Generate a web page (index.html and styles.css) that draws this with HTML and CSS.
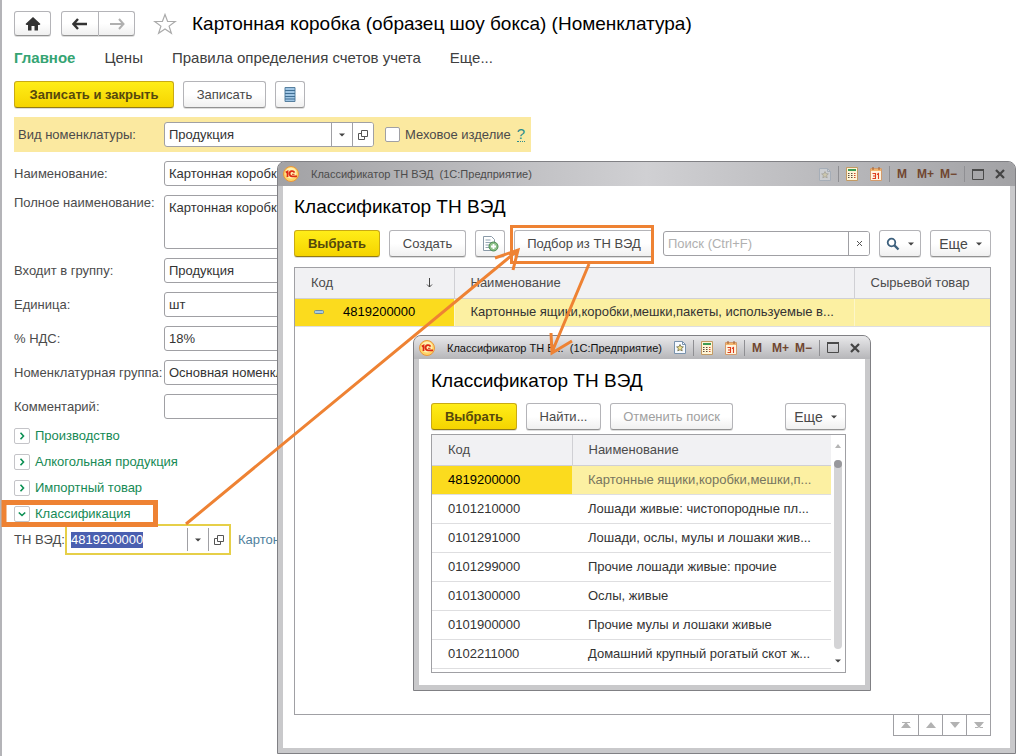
FILE: index.html
```html
<!DOCTYPE html>
<html lang="ru">
<head>
<meta charset="utf-8">
<meta name="viewport" content="width=device-width, initial-scale=1">
<title>Картонная коробка (образец шоу бокса) (Номенклатура)</title>
<link rel="stylesheet" href="styles.css">
</head>
<body>
<svg class="sprite" aria-hidden="true">
  <symbol id="logo" viewBox="0 0 16 16"><circle cx="8" cy="8" r="7.5" fill="#ffd467" stroke="#e9963c"/><circle cx="8" cy="7" r="5.500" fill="#fff0b0"/><path d="M2.800 6.500L4.500 5.500V11M11.500 6.600A2.600 2.600 0 1 0 9.200 10.300H14" fill="none" stroke="#dd2a12" stroke-width="1.800"/><path d="M9 8.300h2.500" stroke="#dd2a12" stroke-width="1"/></symbol>
  <symbol id="open" viewBox="0 0 10 10"><path d="M3.500.5h6v6h-6zM3.500 3.500h-3v6h6v-3" fill="none" stroke="#555"/></symbol>
  <symbol id="caret" viewBox="0 0 6 4"><path d="M0 .5h6L3 3.500z" fill="#444"/></symbol>
  <symbol id="right" viewBox="0 0 8 8"><path d="M2.500 .8L5.500 4l-3 3.200" fill="none" stroke="#0a8f52" stroke-width="1.600"/></symbol>
  <symbol id="down" viewBox="0 0 8 8"><path d="M.8 2.500L4 5.500l3.200-3" fill="none" stroke="#0a8f52" stroke-width="1.600"/></symbol>
  <symbol id="favourite" viewBox="0 0 12 13"><path d="M.5.5h8l3 3v9H.5z" fill="#f6faff" stroke="#7892ad"/><path d="M8.500.5v3h3" fill="none" stroke="#7892ad"/><path d="M6 3.500l1 2.200 2.400.2-1.800 1.600.6 2.400L6 8.700l-2.200 1.200.6-2.400-1.800-1.600L5 5.700z" fill="#f5e58b" stroke="#6f6b45" stroke-width=".8"/></symbol>
  <symbol id="calc" viewBox="0 0 12 14"><path d="M.5.5h11v13H.5z" fill="#fff5d6" stroke="#c39a63"/><path d="M2 2h8v2H2z" fill="#3d9b55"/><path d="M2 6.500h1.500M5 6.500h1.500M2 8.500h1.500M5 8.500h1.500M2 10.500h1.500M5 10.500h1.500" stroke="#5d4a3c"/><path d="M8 6.500h1.500M8 8.500h1.500M8 10.500h1.500" stroke="#d0492c"/></symbol>
  <symbol id="calendar" viewBox="0 0 12 14"><path d="M.5 1.500h11v12H.5z" fill="#fff4df" stroke="#d39b6c"/><path d="M1 2h10v2H1z" fill="#f2b46d"/><path d="M3 0v3M9 0v3" stroke="#a05b2c"/><path d="M2.500 6.500h3v5h-3M3 9h2.500M7 7.500l1.500-1V12" fill="none" stroke="#df3d1d" stroke-width="1.100"/></symbol>
  <symbol id="maximize" viewBox="0 0 12 11"><path d="M.5 1h11v9.500H.5z" fill="none" stroke="#4a4a4a"/><path d="M0 1h12" stroke="#4a4a4a" stroke-width="2"/></symbol>
  <symbol id="close" viewBox="0 0 10 10"><path d="M1 1l8 8M9 1L1 9" stroke="#444" stroke-width="2.200"/></symbol>
</svg>

<main class="card">
  <header class="card-head">
    <button class="btn btn-home" type="button" aria-label="Домой"><svg width="16" height="14" viewBox="0 0 16 14"><path d="M8 0l7.500 7-1 1H13v5.500H9.500V9h-3v4.500H3V8H1.500l-1-1z" fill="#333"/></svg></button>
    <div class="history">
      <button class="btn" type="button" aria-label="Назад"><svg width="16" height="12" viewBox="0 0 16 12"><path d="M6 1L1.500 6 6 11M2 6h13" fill="none" stroke="#333" stroke-width="2.400"/></svg></button>
      <button class="btn" type="button" aria-label="Вперед"><svg width="16" height="12" viewBox="0 0 16 12"><path d="M10 1l4.500 5-4.500 5M14 6H1" fill="none" stroke="#b0b0b0" stroke-width="2"/></svg></button>
    </div>
    <svg class="star" width="24" height="22" viewBox="0 0 24 22"><path d="M12 1.500l2.600 7h7.600l-6.100 4.600 2.300 7.200L12 16l-6.400 4.300 2.300-7.200L1.800 8.500h7.600z" fill="#fff" stroke="#aaa" stroke-width="1.200"/></svg>
    <h1 class="title">Картонная коробка (образец шоу бокса) (Номенклатура)</h1>
  </header>
  <nav class="tabs">
    <a class="tab tab-active" href="#">Главное</a>
    <a class="tab" href="#">Цены</a>
    <a class="tab" href="#">Правила определения счетов учета</a>
    <a class="tab" href="#">Еще...</a>
  </nav>
  <div class="commands">
    <button class="btn btn-main btn-save" type="button">Записать и закрыть</button>
    <button class="btn btn-write" type="button">Записать</button>
    <button class="btn btn-icon" type="button" aria-label="Список"><svg width="12" height="15" viewBox="0 0 12 15"><path d="M1 .5h10v14H1z" fill="#9fc5e4" stroke="#57809f"/><path d="M1 3.500h10M1 6.500h10M1 9.500h10M1 12h10" stroke="#406f94"/></svg></button>
  </div>

  <div class="kind">
    <label class="label" for="kind">Вид номенклатуры:</label>
    <div class="combo">
      <input class="combo-text" id="kind" value="Продукция">
      <button class="combo-btn" type="button" aria-label="Выбрать"><svg width="6" height="4"><use href="#caret"/></svg></button>
      <button class="combo-btn" type="button" aria-label="Открыть"><svg width="10" height="10"><use href="#open"/></svg></button>
    </div>
    <label class="check"><input class="check-box" type="checkbox">Меховое изделие</label>
    <a class="help" href="#">?</a>
  </div>

  <form class="fields">
    <label class="label" for="name">Наименование:</label><input class="field" id="name" value="Картонная коробка">
    <label class="label label-top" for="full">Полное наименование:</label><textarea class="field field-tall" id="full">Картонная коробка</textarea>
    <label class="label" for="group">Входит в группу:</label><input class="field" id="group" value="Продукция">
    <label class="label" for="unit">Единица:</label><input class="field" id="unit" value="шт">
    <label class="label" for="vat">% НДС:</label><input class="field" id="vat" value="18%">
    <label class="label" for="ngroup">Номенклатурная группа:</label><input class="field" id="ngroup" value="Основная номенклатурная группа">
    <label class="label" for="comment">Комментарий:</label><input class="field" id="comment">
  </form>

  <div class="sections">
    <button class="section" type="button"><span class="section-mark"><svg width="8" height="8"><use href="#right"/></svg></span>Производство</button>
    <button class="section" type="button"><span class="section-mark"><svg width="8" height="8"><use href="#right"/></svg></span>Алкогольная продукция</button>
    <button class="section" type="button"><span class="section-mark"><svg width="8" height="8"><use href="#right"/></svg></span>Импортный товар</button>
    <button class="section" type="button"><span class="section-mark"><svg width="8" height="8"><use href="#down"/></svg></span>Классификация</button>
  </div>
  <div class="code">
    <span class="label" id="code-label">ТН ВЭД:</span>
    <div class="combo combo-focus">
      <div class="combo-text" role="textbox" aria-labelledby="code-label" contenteditable="true"><span class="selected">4819200000</span></div>
      <button class="combo-btn" type="button" aria-label="Выбрать"><svg width="6" height="4"><use href="#caret"/></svg></button>
      <button class="combo-btn" type="button" aria-label="Открыть"><svg width="10" height="10"><use href="#open"/></svg></button>
    </div>
    <a class="code-link" href="#">Картон</a>
  </div>
</main>

<section class="window window-list">
  <header class="bar">
    <svg width="16" height="16"><use href="#logo"/></svg>
    <span class="bar-title">Классификатор ТН ВЭД&nbsp; (1С:Предприятие)</span>
    <div class="bar-tools">
      <svg class="faded" width="12" height="13"><use href="#favourite"/></svg><i class="bar-sep"></i>
      <svg width="12" height="14"><use href="#calc"/></svg>
      <svg class="bar-cal" width="12" height="14"><use href="#calendar"/></svg><i class="bar-sep"></i>
      <b class="mem">M</b><b class="mem mem-plus">M+</b><b class="mem mem-minus">M−</b><i class="bar-sep"></i>
      <svg width="12" height="11"><use href="#maximize"/></svg>
      <svg class="bar-close" width="10" height="10"><use href="#close"/></svg>
    </div>
  </header>
  <div class="pane">
    <h2 class="title">Классификатор ТН ВЭД</h2>
    <div class="tools">
      <button class="btn btn-main btn-choose" type="button">Выбрать</button>
      <button class="btn btn-create" type="button">Создать</button>
      <button class="btn btn-icon" type="button" aria-label="Создать копированием"><svg width="17" height="16" viewBox="0 0 17 16"><path d="M1.500.5h8l3 3v11h-11z" fill="#fff" stroke="#8a9aa8"/><path d="M3.500 4h5M3.500 6.500h7M3.500 9h5M3.500 11.500h4" stroke="#92a5b3"/><circle cx="11.500" cy="10.500" r="4.500" fill="#8cc088" stroke="#4b8a50"/><path d="M11.500 8v5M9 10.500h5" stroke="#fff" stroke-width="1.800"/></svg></button>
      <button class="btn btn-pick" type="button">Подбор из ТН ВЭД</button>
      <div class="combo search">
        <input class="combo-text" type="search" placeholder="Поиск (Ctrl+F)" aria-label="Поиск">
        <button class="combo-btn" type="button" aria-label="Очистить"><svg width="7" height="7" viewBox="0 0 7 7"><path d="M1 1l5 5M6 1L1 6" stroke="#555"/></svg></button>
      </div>
      <button class="btn btn-find" type="button" aria-label="Найти"><svg width="14" height="14" viewBox="0 0 14 14"><circle cx="5.500" cy="5.500" r="3.800" fill="none" stroke="#3e617e" stroke-width="1.800"/><path d="M8.200 8.200l4.300 4.300" stroke="#3e617e" stroke-width="2.400"/></svg><svg width="6" height="4"><use href="#caret"/></svg></button>
      <button class="btn btn-more" type="button">Еще<svg width="6" height="4"><use href="#caret"/></svg></button>
    </div>
    <div class="grid">
      <table class="table">
        <colgroup><col class="col-code"><col><col class="col-raw"></colgroup>
        <thead><tr>
          <th><span class="sorted">Код<svg width="7" height="10" viewBox="0 0 7 10"><path d="M3.500 0v9M1 6.500l2.500 2.500L6 6.500" fill="none" stroke="#444"/></svg></span></th>
          <th>Наименование</th><th>Сырьевой товар</th>
        </tr></thead>
        <tbody><tr class="row-current">
          <td class="cell-current"><span class="item"><svg width="10" height="4" viewBox="0 0 10 4"><rect x=".5" y=".5" width="9" height="3" rx="1" fill="#a9cbe0" stroke="#6c8c9a"/></svg>4819200000</span></td>
          <td>Картонные ящики,коробки,мешки,пакеты, используемые в...</td><td></td>
        </tr></tbody>
      </table>
    </div>
    <div class="pager">
      <button class="page" type="button" aria-label="В начало"><svg width="10" height="6" viewBox="0 0 10 6"><path d="M1 0h8v1H1zM5 0l5 6H0z" fill="#b2b2b2"/></svg></button>
      <button class="page" type="button" aria-label="Вверх"><svg width="10" height="6" viewBox="0 0 10 6"><path d="M5 0l5 6H0z" fill="#b2b2b2"/></svg></button>
      <button class="page" type="button" aria-label="Вниз"><svg width="10" height="6" viewBox="0 0 10 6"><path d="M5 6l5-6H0z" fill="#b2b2b2"/></svg></button>
      <button class="page" type="button" aria-label="В конец"><svg width="10" height="6" viewBox="0 0 10 6"><path d="M1 5h8v1H1zM5 6l5-6H0z" fill="#b2b2b2"/></svg></button>
    </div>
  </div>
</section>

<section class="window window-pick">
  <header class="bar">
    <svg width="16" height="16"><use href="#logo"/></svg>
    <span class="bar-title">Классификатор ТН В...&nbsp; (1С:Предприятие)</span>
    <div class="bar-tools">
      <svg width="12" height="13"><use href="#favourite"/></svg><i class="bar-sep"></i>
      <svg width="12" height="14"><use href="#calc"/></svg>
      <svg class="bar-cal" width="12" height="14"><use href="#calendar"/></svg><i class="bar-sep"></i>
      <b class="mem">M</b><b class="mem mem-plus">M+</b><b class="mem mem-minus">M−</b><i class="bar-sep"></i>
      <svg width="12" height="11"><use href="#maximize"/></svg>
      <svg class="bar-close" width="10" height="10"><use href="#close"/></svg>
    </div>
  </header>
  <div class="pane">
    <h2 class="title">Классификатор ТН ВЭД</h2>
    <div class="tools">
      <button class="btn btn-main btn-choose" type="button">Выбрать</button>
      <button class="btn btn-search" type="button">Найти...</button>
      <button class="btn btn-cancel" type="button" disabled>Отменить поиск</button>
      <button class="btn btn-more" type="button">Еще<svg width="6" height="4"><use href="#caret"/></svg></button>
    </div>
    <div class="grid grid-scroll">
      <table class="table">
        <colgroup><col class="col-num"><col></colgroup>
        <thead><tr><th>Код</th><th>Наименование</th></tr></thead>
        <tbody>
          <tr class="row-current"><td class="cell-current">4819200000</td><td class="muted">Картонные ящики,коробки,мешки,п...</td></tr>
          <tr><td>0101210000</td><td>Лошади живые: чистопородные пл...</td></tr>
          <tr><td>0101291000</td><td>Лошади, ослы, мулы и лошаки жив...</td></tr>
          <tr><td>0101299000</td><td>Прочие лошади живые: прочие</td></tr>
          <tr><td>0101300000</td><td>Ослы, живые</td></tr>
          <tr><td>0101900000</td><td>Прочие мулы и лошаки живые</td></tr>
          <tr><td>0102211000</td><td>Домашний крупный рогатый скот ж...</td></tr>
        </tbody>
      </table>
      <div class="scroll">
        <svg width="6" height="4" viewBox="0 0 6 4"><path d="M3 0l3 4H0z" fill="#b5b5b5"/></svg>
        <div class="scroll-track"><div class="scroll-thumb"></div></div>
        <svg width="6" height="4"><use href="#caret"/></svg>
      </div>
    </div>
  </div>
</section>

<svg class="marks" width="700" height="560" viewBox="0 0 700 560" fill="none" stroke="#ee8233" stroke-width="3" aria-hidden="true">
  <rect x="4" y="502.500" width="151.500" height="22" stroke-width="5"/>
  <rect x="511.500" y="226.500" width="141" height="36"/>
  <path d="M186 524L517 251M495 258l23-8-5 20M589 264l-37 88M551 333l1 20 20-12"/>
</svg>
</body>
</html>
```
FILE: styles.css
```css
* { box-sizing: border-box; }
body {
  margin: 0;
  min-height: 100vh;
  position: relative;
  overflow: hidden;
  background: #fff;
  color: #333;
  font: 13px/16px "Liberation Sans", Arial, sans-serif;
}
button, input, textarea { font: inherit; color: inherit; margin: 0; }
button { padding: 0; }
a { text-decoration: none; color: inherit; }
svg { display: block; flex: none; }
.sprite { position: absolute; width: 0; height: 0; }

.card { min-height: 100vh; border-left: 2px solid #b4b4b8; padding: 11px 12px 0; }
.card-head { display: flex; align-items: center; height: 25px; }
.title { margin: 0; font-size: 19px; line-height: 24px; font-weight: 400; color: #000; white-space: nowrap; }
.btn {
  display: flex; align-items: center; justify-content: center; gap: 8px;
  height: 27px; flex: none; white-space: nowrap;
  border: 1px solid #b4b4b8; border-bottom-color: #929292; border-radius: 3px;
  background: linear-gradient(#fff 50%, #f0f0f0);
  color: #484848;
  box-shadow: 0 1px 0 #ddd;
}
.btn-main { background: linear-gradient(#ffed18, #f5d400); border-color: #c9aa14; border-bottom-color: #937b14; color: #55480c; font-weight: 700; }
.btn-home { width: 37px; height: 25px; }
.history { display: flex; margin: 0 18px 0 10px; }
.history .btn { width: 38px; height: 25px; }
.history .btn:first-child { border-radius: 3px 0 0 3px; }
.history .btn:last-child { border-radius: 0 3px 3px 0; border-left: 0; width: 36px; }
.star { margin-right: 15px; }
.tabs { display: flex; gap: 29px; margin-top: 13px; font-size: 15px; line-height: 18px; color: #404040; }
.tab-active { color: #35a473; font-weight: 700; }
.commands { display: flex; gap: 9px; margin-top: 14px; }
.btn-save { width: 160px; }
.btn-write { width: 83px; }
.btn-icon { width: 30px; }

.kind { display: flex; align-items: center; width: 517px; max-width: 100%; height: 35px; margin-top: 9px; padding: 0 4px; background: #fbe9a0; }
.kind .label { width: 146px; }
.label { color: #4b4b4b; white-space: nowrap; }
.combo { display: flex; width: 210px; height: 25px; border: 1px solid #a0a0a4; border-radius: 3px; background: #fff; overflow: hidden; }
.combo-text { flex: 1; min-width: 0; border: 0; padding: 0 4px; background: none; outline: 0; }
.combo-text::placeholder { color: #b0b0b0; opacity: 1; }
.combo-btn { display: flex; align-items: center; justify-content: center; width: 21px; border: 0; border-left: 1px solid #a0a0a4; background: #fff; }
.check { display: flex; align-items: center; gap: 5px; margin-left: 11px; color: #4b4b4b; }
.check-box { appearance: none; width: 15px; height: 15px; margin: 0; border: 1px solid #a0a0a4; border-radius: 2px; background: #fff; }
.help { margin-left: 6px; color: #2c8c8c; border-bottom: 1px dotted #2c8c8c; font-size: 15px; line-height: 14px; }

.fields { display: grid; grid-template-columns: 150px 1fr; gap: 9px 0; align-items: center; margin-top: 9px; }
.field { height: 25px; width: 100%; border: 1px solid #a0a0a4; border-radius: 3px; padding: 0 4px; background: #fff; resize: none; outline: 0; display: block; }
.field-tall { height: 54px; padding-top: 4px; }
.label-top { align-self: start; }

.sections { display: flex; flex-direction: column; align-items: flex-start; gap: 10px; margin-top: 9px; }
.section { display: flex; align-items: center; gap: 5px; height: 16px; border: 0; background: none; color: #168a55; }
.section-mark { display: flex; align-items: center; justify-content: center; width: 16px; height: 16px; border: 1px solid #c4c4c8; border-radius: 2px; background: #fff; }
.code { display: flex; align-items: center; margin-top: 2px; }
.code .label { width: 51px; }
.combo-focus { width: 166px; height: 31px; border: 2px solid #e6cf48; border-radius: 0; padding: 2px 0; }
.combo-focus .combo-text { padding: 4px; line-height: 16px; }
.selected { display: inline-block; background: #4a5fb0; color: #fff; }
.code-link { margin-left: 7px; color: #507f9d; }

.window { position: absolute; display: flex; flex-direction: column; border: 1px solid #808084; border-radius: 8px 8px 0 0; background: #c9c9cb; padding: 0 5px 5px; overflow: hidden; }
.window-list { left: 277px; top: 161px; right: 5px; bottom: 2px; }
.window-pick { left: 413px; top: 335px; width: 458px; }
.bar { display: flex; align-items: center; height: 24px; margin: 0 -5px; padding: 0 10px 0 5px; background: linear-gradient(90deg, #a2a2a5, #d0d0d3 50%, #a2a2a5); }
.window-pick .bar { height: 23px; background: linear-gradient(#e8e8ea, #b6b6b9); }
.bar-title { margin-left: 12px; font-size: 11px; white-space: nowrap; color: #4c4c4c; }
.window-pick .bar-title { color: #111; }
.bar-tools { display: flex; align-items: center; margin-left: auto; }
.bar-sep { width: 1px; height: 16px; margin: 0 7px; background: #8f8f93; }
.bar-cal { margin-left: 12px; }
.bar-close { margin-left: 11px; }
.mem { font-size: 12px; color: #704630; }
.mem-plus { margin-left: 10px; }
.mem-minus { margin-left: 6px; }
.faded { opacity: .3; }
.pane { display: flex; flex-direction: column; flex: 1; min-height: 0; background: #fff; padding: 9px 19px 12px 11px; }
.window-pick .pane { padding: 10px 19px 12px 12px; }
.tools { display: flex; align-items: center; gap: 9px; margin: 11px 0 10px; }
.window-pick .tools { margin: 10px 0 4px; }
.btn-choose { width: 86px; }
.btn-create { width: 77px; }
.btn-pick { width: 140px; }
.search { flex: 1; min-width: 0; width: auto; }
.btn-find { width: 42px; }
.btn-more { width: 61px; font-size: 14px; }
.btn-search { width: 75px; }
.btn-cancel { width: 123px; color: #a0a0a0; }
.window-pick .btn-more { margin-left: auto; }

.grid { flex: 1; border: 1px solid #a0a0a4; }
.table { width: 100%; border-collapse: collapse; table-layout: fixed; }
.col-code { width: 159px; }
.col-raw { width: 136px; }
.col-num { width: 140px; }
.table th { height: 30px; padding: 0 16px; background: #f1f1f3; border-bottom: 1px solid #d0d0d4; font-weight: 400; text-align: left; color: #4b4b4b; }
.table th + th { border-left: 1px solid #d0d0d4; }
.table td { height: 29px; padding: 0 16px; border-bottom: 1px solid #dedee0; white-space: nowrap; }
.window-list .table td { height: 28px; }
.window-list .table td + td { border-left: 1px solid #fdf6c8; }
.row-current td { background: #fcf0a2; }
.table .row-current .cell-current { background: #fbdb1e; color: #000; }
.table .muted { color: #77755f; }
.sorted { display: flex; align-items: center; justify-content: space-between; padding-right: 5px; }
.item { display: flex; align-items: center; gap: 19px; padding-left: 3px; }
.grid-scroll { display: flex; padding-bottom: 3px; }
.grid-scroll .table { flex: 1; min-width: 0; }
.scroll { display: flex; flex-direction: column; align-items: center; width: 14px; padding: 9px 0 6px; gap: 12px; }
.scroll-track { flex: 1; width: 8px; border-radius: 4px; background: #d4d4d6; margin-bottom: -2px; }
.scroll-thumb { width: 8px; height: 8px; border-radius: 4px; background: #98989c; }
.pager { display: flex; align-self: flex-end; margin-top: -1px; border: 1px solid #a0a0a4; }
.page { display: flex; align-items: center; justify-content: center; width: 24px; height: 20px; border: 0; background: #fff; }
.page + .page { border-left: 1px solid #a0a0a4; }
.marks { position: absolute; left: 0; top: 0; pointer-events: none; }
```
